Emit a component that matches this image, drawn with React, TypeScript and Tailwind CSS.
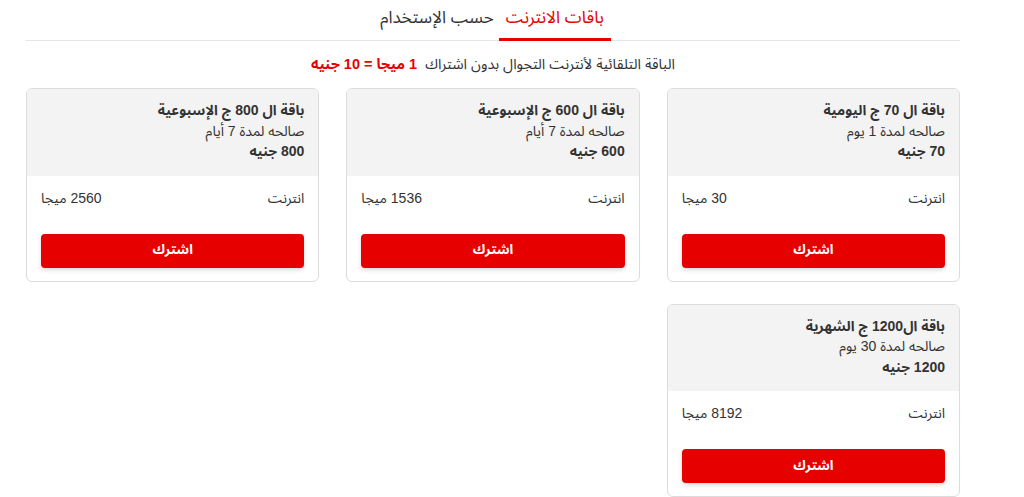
import React from "react";

type Plan = {
  title: string;
  validity: string;
  price: string;
  mb: string;
};

const plans: Plan[] = [
  { title: "باقة ال 70 ج اليومية", validity: "صالحه لمدة 1 يوم", price: "70 جنيه", mb: "30 ميجا" },
  { title: "باقة ال 600 ج الإسبوعية", validity: "صالحه لمدة 7 أيام", price: "600 جنيه", mb: "1536 ميجا" },
  { title: "باقة ال 800 ج الإسبوعية", validity: "صالحه لمدة 7 أيام", price: "800 جنيه", mb: "2560 ميجا" },
  { title: "باقة ال1200 ج الشهرية", validity: "صالحه لمدة 30 يوم", price: "1200 جنيه", mb: "8192 ميجا" },
];

const PlanCard = ({ plan }: { plan: Plan }) => (
  <div className="border border-[#dcdcdc] rounded-md overflow-hidden bg-white">
    <div className="bg-[#f3f3f3] px-[14px] pt-[11px] pb-[14px] text-[14px] leading-[20.5px] text-[#333]">
      <div className="font-bold">{plan.title}</div>
      <div>{plan.validity}</div>
      <div className="font-bold">{plan.price}</div>
    </div>
    <div className="px-[14px] pt-[12px] pb-[13px]">
      <div className="flex justify-between text-[14px] leading-5 text-[#333]">
        <span>انترنت</span>
        <span>{plan.mb}</span>
      </div>
      <button className="mt-[26px] w-full h-[34px] rounded-[4px] bg-[#e60000] text-white text-[13.5px] font-bold shadow-[0_2px_4px_rgba(0,0,0,0.15)]">
        اشترك
      </button>
    </div>
  </div>
);

export default function App() {
  return (
    <div
      dir="rtl"
      className="bg-white min-h-screen pr-[64px] pl-[26px]"
      style={{ fontFamily: "'Liberation Sans', 'Noto Sans Arabic', 'Noto Sans', 'DejaVu Sans', sans-serif" }}
    >
      <div className="flex justify-center border-b border-[#e5e5e5]">
        <div className="px-[7px] pt-[6px] pb-[8px] text-[17px] text-[#e60000] border-b-[3px] border-[#e60000] -mb-px leading-[24px]">
          باقات الانترنت
        </div>
        <div className="px-[5px] pt-[6px] pb-[8px] text-[17px] text-[#333] leading-[24px]">
          حسب الإستخدام
        </div>
      </div>
      <p className="text-center text-[14.5px] text-[#333] mt-[13px] leading-5">
        الباقة التلقائية لأنترنت التجوال بدون اشتراك&nbsp;&nbsp;
        <span className="text-[#e60000] font-bold">1 ميجا = 10 جنيه</span>
      </p>
      <div className="grid grid-cols-3 gap-x-[27px] gap-y-[22px] mt-[14px]">
        {plans.map((p) => (
          <PlanCard key={p.title} plan={p} />
        ))}
      </div>
    </div>
  );
}
